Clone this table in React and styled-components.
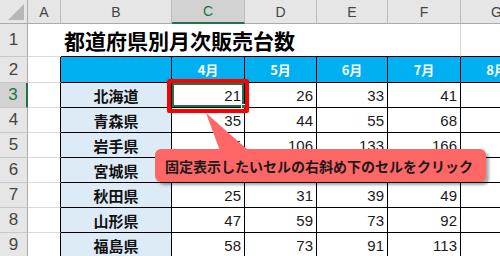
import React from 'react';
import styled, { createGlobalStyle } from 'styled-components';

const GlobalStyle = createGlobalStyle`
  html, body {
    margin: 0;
    padding: 0;
    width: 500px;
    height: 256px;
    overflow: hidden;
    background: #ffffff;
  }
`;

const JP = `"Noto Sans CJK JP", "Noto Sans", sans-serif`;
const LATIN = `"Liberation Sans", "Noto Sans CJK JP", sans-serif`;
const GREEN = '#217346';
const GRID = '#d9d9d9';

const letters = ['A', 'B', 'C', 'D', 'E', 'F', 'G'];
const months = ['4月', '5月', '6月', '7月', '8月'];
const rows = [
  { name: '北海道', values: [21, 26, 33, 41] },
  { name: '青森県', values: [35, 44, 55, 68] },
  { name: '岩手県', values: [85, 106, 133, 166] },
  { name: '宮城県', values: [64, 80, 100, 125] },
  { name: '秋田県', values: [25, 31, 39, 49] },
  { name: '山形県', values: [47, 59, 73, 92] },
  { name: '福島県', values: [58, 73, 91, 113] },
];

export default function App() {
  return (
    <>
      <GlobalStyle />
      <Sheet>
        <Corner>
          <svg width='28' height='24' viewBox='0 0 28 24'>
            <polygon points='8,20 24,20 24,4' fill='#b7b7b7' />
          </svg>
        </Corner>
        {letters.map((l) => (
          <ColHead key={l} $selected={l === 'C'}>
            {l}
          </ColHead>
        ))}

        <RowHead>1</RowHead>
        <Blank $noRight />
        <TitleCell>都道府県別月次販売台数</TitleCell>
        <Blank $bottom='#000' />

        <RowHead>2</RowHead>
        <Blank $right='#000' />
        <MonthHead />
        {months.map((m) => (
          <MonthHead key={m}>{m}</MonthHead>
        ))}

        {rows.map((r, i) => (
          <React.Fragment key={r.name}>
            <RowHead $selected={i === 0}>{i + 3}</RowHead>
            <Blank $right='#000' />
            <PrefCell>{r.name}</PrefCell>
            {r.values.map((v, j) => (
              <NumCell key={j} $selected={i === 0 && j === 0}>
                {v}
                {i === 0 && j === 0 && <FillHandle />}
              </NumCell>
            ))}
            <NumCell />
          </React.Fragment>
        ))}

        <Highlight />
        <Callout>
          <Pointer width='46' height='40' viewBox='0 0 46 40'>
            <polygon points='1,1 15,39 44,39' fill='#ff6666' />
          </Pointer>
          固定表示したいセルの右斜め下のセルをクリック
        </Callout>
      </Sheet>
    </>
  );
}

const Sheet = styled.div`
  position: relative;
  display: grid;
  grid-template-columns: 28px 33px 111px 73px 72px 71px 73px 72px;
  grid-template-rows: 24px 33px 26px repeat(7, 25px);
  width: 533px;
  & > * {
    box-sizing: border-box;
  }
`;

const Corner = styled.div`
  background: #e6e6e6;
  border-right: 1px solid #ababab;
  border-bottom: 1px solid #ababab;
  svg {
    display: block;
  }
`;

const ColHead = styled.div`
  display: flex;
  align-items: center;
  justify-content: center;
  background: ${(p) => (p.$selected ? '#d2d2d2' : '#e6e6e6')};
  color: ${(p) => (p.$selected ? GREEN : '#444444')};
  border-right: 1px solid #bcbcbc;
  border-bottom: ${(p) => (p.$selected ? `2px solid ${GREEN}` : '1px solid #ababab')};
  font-family: ${LATIN};
  font-size: 14px;
`;

const RowHead = styled.div`
  display: flex;
  align-items: center;
  justify-content: center;
  background: ${(p) => (p.$selected ? '#d2d2d2' : '#e6e6e6')};
  color: ${(p) => (p.$selected ? GREEN : '#444444')};
  border-right: ${(p) => (p.$selected ? `2px solid ${GREEN}` : '1px solid #ababab')};
  border-bottom: 1px solid #c8c8c8;
  font-family: ${LATIN};
  font-size: 17px;
`;

const Blank = styled.div`
  background: #ffffff;
  border-right: 1px solid ${(p) => (p.$noRight ? '#ffffff' : p.$right || GRID)};
  border-bottom: 1px solid ${(p) => p.$bottom || GRID};
`;

const TitleCell = styled.div`
  grid-column: span 5;
  display: flex;
  align-items: center;
  padding-left: 3px;
  border-right: 1px solid ${GRID};
  border-bottom: 1px solid #000000;
  font-family: ${JP};
  font-weight: 700;
  font-size: 21px;
  color: #000000;
`;

const MonthHead = styled.div`
  display: flex;
  align-items: center;
  justify-content: center;
  background: #00b0f0;
  border-right: 1px solid #000000;
  border-bottom: 1px solid #000000;
  font-family: ${JP};
  font-weight: 700;
  font-size: 13px;
  color: #ffffff;
`;

const PrefCell = styled.div`
  display: flex;
  align-items: center;
  justify-content: center;
  background: #ddebf7;
  border-right: 1px solid #000000;
  border-bottom: 1px solid #000000;
  font-family: ${JP};
  font-weight: 700;
  font-size: 15px;
  color: #111111;
`;

const NumCell = styled.div`
  position: relative;
  display: flex;
  align-items: center;
  justify-content: flex-end;
  padding-right: 3px;
  background: #ffffff;
  border-right: 1px solid #000000;
  border-bottom: 1px solid #000000;
  box-shadow: ${(p) => (p.$selected ? `inset 0 0 0 2px ${GREEN}` : 'none')};
  font-family: ${LATIN};
  font-size: 15px;
  color: #1a1a1a;
`;

const FillHandle = styled.span`
  position: absolute;
  right: -3px;
  bottom: -3px;
  width: 6px;
  height: 6px;
  box-sizing: border-box;
  background: ${GREEN};
  border: 1px solid #ffffff;
`;

const Highlight = styled.div`
  position: absolute;
  left: 167px;
  top: 79px;
  width: 82px;
  height: 34px;
  box-sizing: border-box;
  border: 4px solid #ff0000;
  border-radius: 2px;
`;

const Callout = styled.div`
  position: absolute;
  left: 155px;
  top: 149px;
  width: 331px;
  height: 33px;
  box-sizing: border-box;
  display: flex;
  align-items: center;
  padding-left: 10px;
  background: #ff6666;
  border-radius: 6px;
  box-shadow: 3px 3px 3px rgba(0, 0, 0, 0.35);
  font-family: ${JP};
  font-weight: 700;
  font-size: 14px;
  color: #1a1a1a;
  white-space: nowrap;
`;

const Pointer = styled.svg`
  position: absolute;
  left: 50px;
  top: -37px;
  display: block;
`;
